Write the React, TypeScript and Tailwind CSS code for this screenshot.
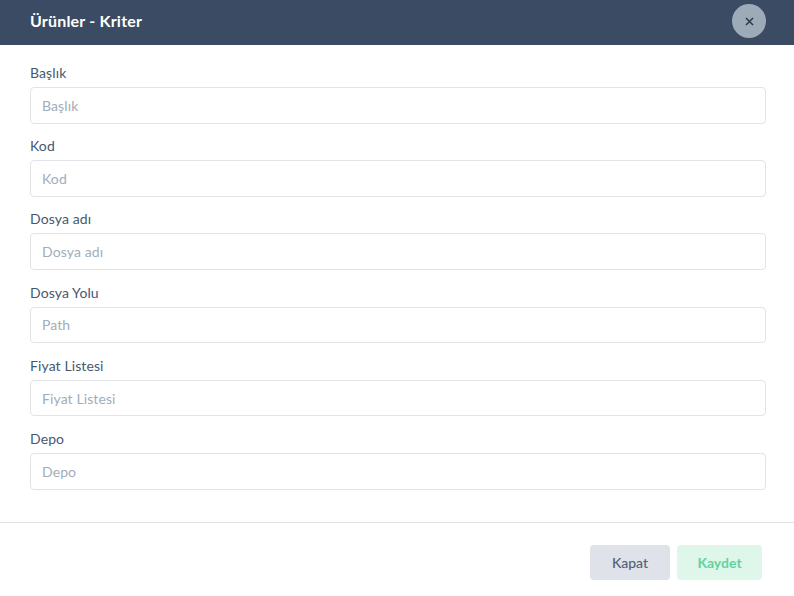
const fields = [
  { label: "Başlık", placeholder: "Başlık" },
  { label: "Kod", placeholder: "Kod" },
  { label: "Dosya adı", placeholder: "Dosya adı" },
  { label: "Dosya Yolu", placeholder: "Path" },
  { label: "Fiyat Listesi", placeholder: "Fiyat Listesi" },
  { label: "Depo", placeholder: "Depo" },
];

export default function App() {
  return (
    <div className="flex h-[596px] w-[794px] flex-col overflow-hidden bg-white font-['Lato',sans-serif]">
      <header className="flex h-[45px] items-center justify-between bg-[#3a4b63] pl-[30px] pr-[28px]">
        <h1 className="mb-[3px] text-[16px] font-bold tracking-[0.2px] text-white">Ürünler - Kriter</h1>
        <button className="mb-[3px] flex h-[34px] w-[34px] items-center justify-center rounded-full bg-[#9dabb8] text-[#2a394c]">
          <svg width="9" height="9" viewBox="0 0 9 9" fill="none" stroke="currentColor" strokeWidth="1.5">
            <path d="M1 1l7 7M8 1L1 8" />
          </svg>
        </button>
      </header>

      <main className="pl-[30px] pr-[28px] pt-[18px]">
        {fields.map((field) => (
          <div key={field.label} className="mb-[12.6px]">
            <label className="block h-[24px] text-[14px] leading-[20px] tracking-[0.1px] text-[#465870]">{field.label}</label>
            <input
              placeholder={field.placeholder}
              className="block h-[36.6px] w-full rounded-[4px] border border-[#e0e3e8] px-[11px] text-[14px] tracking-[0.1px] outline-none placeholder:text-[#9fadbb]"
            />
          </div>
        ))}
      </main>

      <footer className="mt-[20px] flex justify-end gap-[7px] border-t border-[#e0e2e6] pr-[32px] pt-[22px]">
        <button className="h-[35px] w-[80px] rounded-[4px] bg-[#dfe2e8] text-[14px] font-medium text-[#4f6078]">Kapat</button>
        <button className="h-[35px] w-[85px] rounded-[4px] bg-[#dff7ea] text-[14px] font-bold text-[#5fd39f]">Kaydet</button>
      </footer>
    </div>
  );
}
